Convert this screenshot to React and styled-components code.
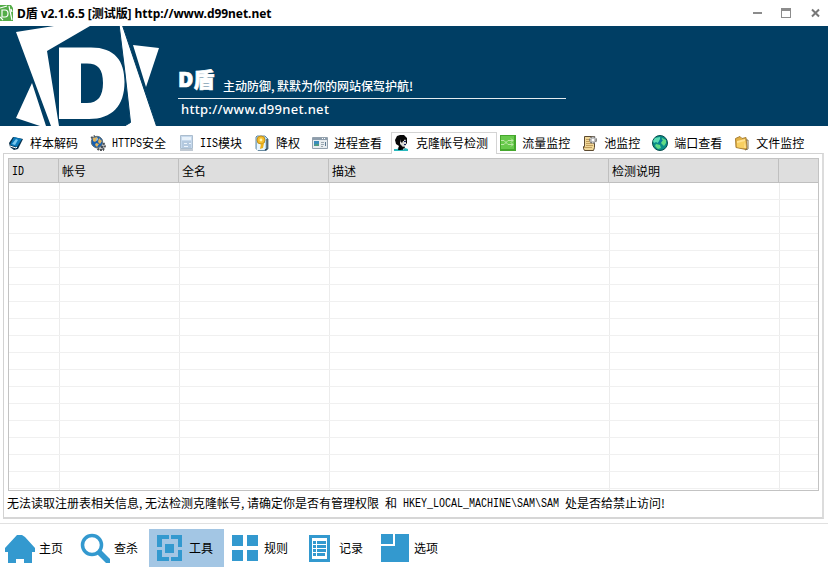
import React from 'react';
import styled, { createGlobalStyle, css } from 'styled-components';

const Global = createGlobalStyle`
  * { box-sizing: border-box; }
  body { margin: 0; background: #fff; overflow: hidden; }
`;

const cjk = '"Noto Sans CJK SC", sans-serif';

const Window = styled.div`
  display: flex;
  flex-direction: column;
  width: 828px;
  height: 576px;
  color: #000;
  background: #fff;
  font: 12px/16px ${cjk};
  white-space: nowrap;
`;
const TitleBar = styled.header`
  display: flex;
  align-items: center;
  height: 26px;
  padding-right: 6px;
`;
const Title = styled.h1`
  flex: 1;
  margin: 0 0 0 4px;
  padding-top: 1px;
  font: bold 12px/16px "Noto Sans", ${cjk};
  letter-spacing: -0.05px;
`;
const WindowButtons = styled.div`
  display: flex;
  gap: 17px;
`;
const Banner = styled.section`
  display: flex;
  height: 100px;
  background: #003e64;
  color: #fff;
`;
const BannerText = styled.div`
  display: flex;
  flex-direction: column;
  margin-left: 18px;
  padding-top: 41px;
  width: 388px;
`;
const Slogan = styled.div`
  display: flex;
  align-items: flex-end;
  height: 32px;
  border-bottom: 1px solid #e4ebef;
`;
const Brand = styled.strong`
  width: 45px;
  font: 800 21px/27px "Open Sans", ${cjk};
  padding-bottom: 5px;
  -webkit-text-stroke: 0.6px #fff;
`;
const Motto = styled.span`
  font: 500 12px/16px ${cjk};
  padding-bottom: 4px;
`;
const Comma = styled.span`
  display: inline-block;
  width: 6px;
`;
const Url = styled.span`
  margin: 1px 0 0 3px;
  font: 500 13px/18px "Noto Sans", sans-serif;
  letter-spacing: 0.3px;
`;
const Tabs = styled.nav`
  display: flex;
  height: 28px;
  padding: 6px 0 0 5px;
  margin-bottom: -1px;
`;
const TabItem = styled.div`
  display: flex;
  flex: none;
  align-items: center;
  gap: 6px;
  height: 22px;
  padding: 0 9px 0 3px;
  ${p => p.$active && css`
    z-index: 1;
    background: #fff;
    box-shadow: inset 1px 1px #d4d4d4, inset -1px 0 #d4d4d4;
  `}
`;
const TextLine = styled.span`
  display: flex;
`;
const Mono = styled.span`
  display: block;
  height: 16px;
  margin-top: 1px;
  font: 10px/16px "Liberation Mono", monospace;
  transform: scaleY(1.25);
`;
const Panel = styled.main`
  height: 366px;
  width: 821px;
  margin-left: 3px;
  padding: 4px;
  border: solid #d2d2d2;
  border-width: 1px 2px 2px 1px;
  border-right-color: #dcdcdc;
  border-bottom-color: #d6d6d6;
`;
const Table = styled.div`
  display: flex;
  flex-direction: column;
  width: 811px;
  height: 333px;
  border: 1px solid #c3c3c3;
`;
const HeadRow = styled.div`
  display: grid;
  grid-template-columns: 50px 120px 150px 280px 170px 1fr;
  flex: none;
  height: 24px;
  background: #dedede;
  border-bottom: 1px solid #bfbfbf;
`;
const HeadCell = styled.div`
  padding: 4px 0 0 3px;
  border-right: 1px solid #bfbfbf;
  &:last-child { border-right: 0; }
`;
const BodyRow = styled.div`
  display: grid;
  grid-template-columns: 51px 120px 150px 280px 170px 1fr;
  flex: 0 0 17px;
  border-bottom: 1px solid #f0f0f0;
  &:last-child { flex-basis: 1px; border-bottom: 0; }
`;
const Cell = styled.div`
  border-right: 1px solid #ececec;
  &:last-child { border-right: 0; }
`;
const Status = styled.div`
  display: flex;
  height: 24px;
  margin-left: -1px;
  padding-top: 4px;
`;
const Toolbar = styled.footer`
  display: flex;
  height: 53px;
  margin-top: 4px;
  padding-top: 5px;
  border-top: 1px solid #e1e1e1;
`;
const ToolButton = styled.div`
  display: flex;
  align-items: center;
  flex: none;
  width: ${p => p.$first ? 74 : 75}px;
  height: 38px;
  gap: 4px;
  padding-left: ${p => p.$first ? 4 : 5}px;
  background: ${p => p.$active ? '#a3c6e4' : 'transparent'};
`;

const Svg = ({ children }) => <svg width="16" height="16" viewBox="0 0 16 16">{children}</svg>;

const AppIcon = () => (
  <svg width="13" height="16" viewBox="0 0 13 16">
    <path fill="#54ad48" d="M0 0H11L13 3V16H0Z" />
    <path fill="none" stroke="#fff" strokeWidth="1.2" d="M0 3 7 1M2 5H5Q8 5 8 8.500T5 12H2ZM9 1 12 15M0 12 3 15M11 4l1 3" />
  </svg>
);
const BannerLogo = () => (
  <svg width="160" height="100" viewBox="0 0 160 100" fill="#fff">
    <path d="M16 6 54 0H90L47 25 59 100H51ZM32 57 46 100H40L16 92ZM133 19 159 22 146 61Z" />
    <path fillRule="evenodd" d="M59 21.500H91C115 21.500 124.500 35 124.500 56 124.500 80 112 93 89 93H59ZM81 37.500V77H87C98 77 103 70 103 57 103 43 98 37.500 87 37.500Z" />
    <path stroke="#003e64" strokeWidth="1" d="M119 -2 125 47 130.500 96.500 122 101.500H157L122 -2Z" />
  </svg>
);

const icons = {
  book: <Svg><path fill="#082f4a" d="m5 2 10 2-5 10-4 1-4-3-1-4Z" /><path fill="#0877b7" d="m6 2 8 2-5 8-7-2Z" /><path fill="#79c7ef" d="m8 4 2 1-3 5-3-1Z" /><path fill="none" stroke="#fff" d="m2 11 6 2 1-1" /></Svg>,
  https: <Svg><path stroke="#4e5155" strokeWidth="2" strokeDasharray="2 1" fill="#c9c9c6" d="M8 7h5l2 4-2 4H9l-3-3ZM1 3l4-2" /><circle cx="7" cy="7" r="5.700" fill="#175eae" stroke="#5f727d" /><path fill="#e1b35a" d="m3 3 4-1 1 2-3 3-2-1Zm6 0 3 3-2 3-2-2Zm-3 5 3 1-2 3-2-2Z" /><path fill="#8ebce0" d="m6 4 2-1v2l-2 1Z" /><circle cx="12" cy="12" r="1.300" fill="#464d57" /></Svg>,
  server: <Svg><path fill="#c6d9ed" stroke="#abbdce" d="M2.500.5h12v13h-12z" /><path fill="#e7f1fa" d="M4 2h9v3H4z" /><path fill="#b4c9df" d="M4 6h9v7H4z" /><path stroke="#eef5fc" d="M6 8.500h3m2 0h2m-7 3h4m1-8h2" /><path stroke="#8294a8" d="M2 15h13" /></Svg>,
  lower: <Svg><path d="M3 1h8l3 3v10l-2 1.500H4l-2-2V2Z" fill="#b3daf4" stroke="#6689a0" /><path d="M4 8h7v5l-1 2H3V9Z" fill="#e8f5fd" /><circle cx="7" cy="5" r="4" fill="#f5bd2c" stroke="#c0901d" /><circle cx="7" cy="5" r="1.400" fill="#fff5ad" /><path d="m7 9 3-1-1 5-3 1Z" fill="#edb21b" /><path d="M13 4v10l-2 1" stroke="#151b20" fill="none" /></Svg>,
  process: <Svg><path fill="#e8ecef" stroke="#93a1ad" d="M.5 2.500h15v11H.5z" /><path fill="#8d9dac" d="M1 3h14v2H1z" /><path fill="#398bba" d="M2 6h5v5H2z" /><path fill="#4e9a80" d="M3 9h4v2H2z" /><path stroke="#9aa7b0" d="M9 7.500h3m-3 2h3m-3 2h2" /><path stroke="#5e7a91" d="M13.500 7v4" /><path stroke="#fff" d="M10 3.500h1m1 0h1" /></Svg>,
  user: <Svg><path fill="#080808" d="M3 1 6 0h4l3 3v5l-3 4-1 3H4l1-4-3-2-1-4Z" /><path fill="#d9d9d4" d="m6 5 5-1 1 2v4l-3 2-3-3Z" /><path fill="#0b0b0b" d="m7 4 2-1 3 1-2 1v1H9L8 8 6 6Z" /><path fill="#29b8bd" d="M0 14h3l2-1 4 2 2-2 3 1v2H0Z" /><path stroke="#14205d" d="M10 6.500h2m-2 3h2" /><path fill="#000" d="M5 11h1l2 4H4Zm4 1h2l-1 2Z" /></Svg>,
  traffic: <Svg><path fill="#45a82d" d="M0 0h16v16H0z" /><path fill="#68ca4c" d="M1 1h13v13H1z" /><path stroke="#bde8a8" fill="none" d="M1 5.500h3l4 4h5m-12 0h3l4-4h5m-2-2 2 2-2 2m0 0 2 2-2 2" /></Svg>,
  pool: <Svg><path fill="#f0d798" stroke="#5b4930" d="M2.500 1.500h10v11l-1 3h-9l-1-2v-2h1Z" /><path stroke="#c09d5e" d="M4 4.500h4m-4 2h4m-4 2h7m-7 2h7m-9 2h8" /><circle cx="11" cy="5" r="3.200" fill="#e4e4e4" stroke="#777" strokeDasharray="2 1" strokeWidth="1.500" /><circle cx="11" cy="5" r="2" fill="#fff" stroke="#aaa" /></Svg>,
  globe: <Svg><circle cx="8" cy="8" r="7.500" fill="#0b8d88" stroke="#064c4b" /><path d="m3 3 5-1v2L6 8 4 7 2 8 1 6Z" fill="#5bdcb4" /><path d="m10 3 4 2v3l-2 3-3-3ZM4 9l4 1 1 3-3 1-3-3Z" fill="#62db85" /><path d="m9 4 2 1-3 4-2-1Z" fill="#0879a0" /></Svg>,
  folder: <Svg><path fill="#e1b044" stroke="#aa8135" d="M1.500 3.500 6 1.500l2 2 4-1 1 10-1 2-10-2Z" /><path fill="#ffe394" d="m3 6 8-2 1 9-9-1Z" /><path fill="#f8cf60" d="m3 8 8-2-1 7-7-1Z" /><path stroke="#807150" d="m11 15 3-1V5h-2" fill="none" /></Svg>,
};

const tabs = [
  ['book', '', '样本解码'], ['https', 'HTTPS', '安全'], ['server', 'IIS', '模块'],
  ['lower', '', '降权'], ['process', '', '进程查看'], ['user', '', '克隆帐号检测'],
  ['traffic', '', '流量监控'], ['pool', '', '池监控'], ['globe', '', '端口查看'], ['folder', '', '文件监控'],
];
const blue = '#3399cf';
const tools = [
  ['主页', <path d="M13 5h5l3 2 10 11v4h-3v11h-8v-4h-8v4H4V22H1v-4Z" />],
  ['查杀', <><circle cx="13" cy="15" r="9.500" fill="none" stroke={blue} strokeWidth="3.500" /><path d="m18 24 4-4 9 9v4h-4Z" /></>],
  ['工具', <path d="M3 5h12v4H8v8H3Zm14 0h11v12h-4V9h-7ZM3 20h5v7h7v4H3Zm21 0h4v11H17v-4h7ZM11 14h9v9h-9Z" />],
  ['规则', <path d="M3 5h11v11H3Zm15 0h11v11H18ZM3 20h11v11H3Zm15 0h11v11H18Z" />],
  ['记录', <><path d="M5 5h21v27H5Z" /><path fill="#fff" d="M8 8h15v21H8Z" /><path d="M9 11h3v3H9Zm4 0h9v3h-9ZM9 15h3v3H9Zm4 0h9v3h-9ZM9 19h3v3H9Zm4 0h9v3h-9ZM9 23h3v3H9Zm4 0h8v3h-8Z" /></>],
  ['选项', <path d="M2 4h12v10H2Zm14 0h14v28H2V16h14Z" />],
];

export default function App() {
  return (
    <Window>
      <Global />
      <TitleBar>
        <AppIcon />
        <Title>D盾 v2.1.6.5 [测试版] http://www.d99net.net</Title>
        <WindowButtons>
          <svg width="12" height="12"><path fill="#8c8c8c" d="M1 5h9v2H1z" /></svg>
          <svg width="12" height="12"><path fill="#8c8c8c" fillRule="evenodd" d="M0 1h10v10H0zM1 4v6h8V4z" /></svg>
          <svg width="12" height="12"><path stroke="#777" strokeWidth="2" d="m2 2.500 7 7m0-7-7 7" /></svg>
        </WindowButtons>
      </TitleBar>
      <Banner>
        <BannerLogo />
        <BannerText>
          <Slogan>
            <Brand>D盾</Brand>
            <Motto>主动防御<Comma>,</Comma>默默为你的网站保驾护航<Comma>!</Comma></Motto>
          </Slogan>
          <Url>http://www.d99net.net</Url>
        </BannerText>
      </Banner>
      <Tabs>
        {tabs.map(([icon, latin, label]) => (
          <TabItem key={icon} $active={icon === 'user'}>
            {icons[icon]}
            <TextLine>{latin && <Mono>{latin}</Mono>}{label}</TextLine>
          </TabItem>
        ))}
      </Tabs>
      <Panel>
        <Table>
          <HeadRow>
            <HeadCell><TextLine><Mono>ID</Mono></TextLine></HeadCell>
            {['帐号', '全名', '描述', '检测说明', ''].map(t => <HeadCell key={t}>{t}</HeadCell>)}
          </HeadRow>
          {Array.from({ length: 19 }, (_, r) => (
            <BodyRow key={r}>{Array.from({ length: 6 }, (_, c) => <Cell key={c} />)}</BodyRow>
          ))}
        </Table>
        <Status>
          <span>无法读取注册表相关信息<Comma>,</Comma>无法检测克隆帐号<Comma>,</Comma>请确定你是否有管理权限<Comma />和<Comma /></span>
          <Mono>HKEY_LOCAL_MACHINE\SAM\SAM</Mono>
          <span><Comma />处是否给禁止访问<Comma>!</Comma></span>
        </Status>
      </Panel>
      <Toolbar>
        {tools.map(([label, shape], i) => (
          <ToolButton key={label} $first={i === 0} $active={i === 2}>
            <svg width="31" height="36" viewBox="0 0 31 36" fill={blue}>{shape}</svg>
            <span>{label}</span>
          </ToolButton>
        ))}
      </Toolbar>
    </Window>
  );
}
